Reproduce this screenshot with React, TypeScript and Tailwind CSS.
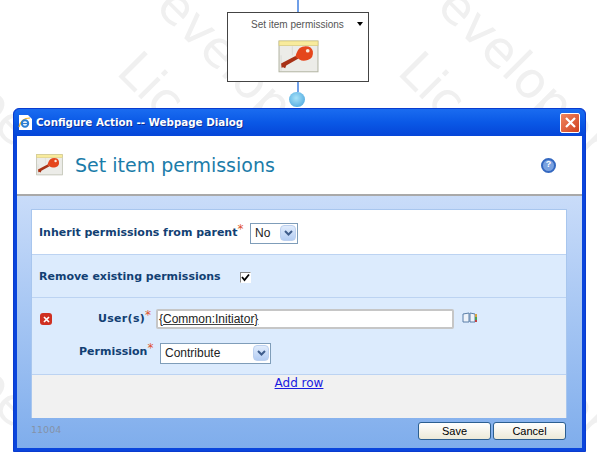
const Key = ({ size }: { size: number }) => (
  <svg width={size} height={size * 0.8} viewBox="0 0 40 32">
    <rect x="1" y="1" width="38" height="30" fill="#ecece8" stroke="#b4b6a4" />
    <rect x="1" y="1" width="38" height="4.5" fill="#f8eb9c" stroke="#d6c97e" strokeWidth="0.7" />
    <path d="M3 15 L3 30 M14 6 L14 15" stroke="#dcdcd6" strokeWidth="1" />
    <path d="M3 23 L17 15.5 L20 18 L8 25 L7 27.5 L5 26.5 L3.5 27 Z" fill="#a83216" />
    <path d="M18 13 Q20 6 27 6 Q33 6 34 11 Q35 18 29 19.5 Q24 21 21 19 L17 16 Z" fill="#e5461c" />
    <circle cx="29" cy="10.5" r="1.8" fill="#f9e9de" />
  </svg>
);

const Mark = ({ label, className }: { label: string; className: string }) => (
  <div className={`absolute rotate-45 origin-left text-[50px] leading-none text-[#f0f0f0] font-['DejaVu_Sans',sans-serif] whitespace-nowrap ${className}`}>{label}</div>
);

const Arrow = () => (
  <span className="w-[16px] self-stretch m-px rounded-sm bg-gradient-to-b from-[#e1ecfc] to-[#b4cdf3] border border-[#bcd0ef] flex items-center justify-center">
    <svg width="9" height="6" viewBox="0 0 9 6"><path d="M1 1 L4.5 4.5 L8 1" fill="none" stroke="#3f5d8c" strokeWidth="2" /></svg>
  </span>
);

const Star = () => <sup className="text-[#e0522d] text-[12px] font-normal leading-none top-[-3px]">*</sup>;

export default function App() {
  return (
    <div className="relative w-[597px] h-[453px] overflow-hidden bg-white font-['Liberation_Sans',sans-serif]">
      <Mark label="Developer" className="left-[139px] top-[-56px]" />
      <Mark label="Lic" className="left-[127px] top-[36px]" />
      <Mark label="Developer" className="left-[420px] top-[-56px]" />
      <Mark label="Lic" className="left-[408px] top-[36px]" />
      <Mark label="Developer" className="left-[-142px] top-[-56px]" />
      <Mark label="Developer" className="left-[-142px] top-[225px]" />
      <Mark label="Developer" className="left-[420px] top-[225px]" />
      <div className="relative flex flex-col">
        <div className="flex flex-col items-center w-[596px]">
          <div className="w-[2px] h-[12px] bg-[#6f9fe8]" />
          <div className="w-[142px] h-[70px] border border-[#444] bg-white flex flex-col">
            <div className="flex items-start h-[27px] pt-[4px] text-[10px] text-[#555] pl-[23px] pr-[5px] justify-between">
              <span>Set item permissions</span>
              <span className="mt-[5px] w-0 h-0 border-x-[3px] border-t-[4px] border-x-transparent border-t-black" />
            </div>
            <div className="flex justify-center"><Key size={41} /></div>
          </div>
          <div className="w-[2px] h-[10px] bg-[#6f9fe8]" />
          <div className="w-[16px] h-[15px] -ml-[2px] rounded-full bg-[radial-gradient(circle_at_45%_40%,#a8e2f8,#3f9fdc)]" />
        </div>
        <div className="ml-[13px] mt-[1px] w-[573px] h-[344px] rounded-t-[6px] bg-[#0a45dc] border border-[#0a3ccf] px-[3px] pb-[3px] flex flex-col">
          <div className="h-[27px] -mx-[3px] rounded-t-[6px] bg-gradient-to-b from-[#1a6cf0] via-[#0a58e6] to-[#0645d8] flex items-center pl-[4px] pr-[5px] shrink-0">
            <svg width="14" height="15" viewBox="0 0 14 15">
              <path d="M1 0 H10 L14 4 V15 H1 Z" fill="white" />
              <path d="M1 12 Q3 3 12 3" fill="none" stroke="#f0b429" strokeWidth="1.2" />
              <circle cx="7" cy="8.5" r="3.2" fill="none" stroke="#2b7fd4" strokeWidth="2" />
              <path d="M4 8.5 H10" stroke="#2b7fd4" strokeWidth="1.2" />
            </svg>
            <span className="ml-[4px] text-white text-[10.3px] font-bold font-['DejaVu_Sans',sans-serif] [text-shadow:1px_1px_0_#0a2f9a]">Configure Action -- Webpage Dialog</span>
            <span className="ml-auto w-[20px] h-[20px] rounded-[2px] border border-white bg-gradient-to-br from-[#f0855e] to-[#cf3f1d] flex items-center justify-center">
              <svg width="11" height="11" viewBox="0 0 11 11"><path d="M1 1 L10 10 M10 1 L1 10" stroke="white" strokeWidth="2.2" /></svg>
            </span>
          </div>
          <div className="h-[60px] bg-white border-b-2 border-[#a9a9a9] flex items-center pl-[19px] pr-[26px] shrink-0">
            <Key size={27} />
            <span className="ml-[12px] text-[#1b7ca9] text-[19px] font-['DejaVu_Sans',sans-serif]">Set item permissions</span>
            <span className="ml-auto w-[15px] h-[15px] rounded-full border-2 border-[#3468c0] bg-[#7aa2e0] text-white text-[9px] font-bold flex items-center justify-center">?</span>
          </div>
          <div className="flex-1 bg-gradient-to-b from-[#c9dcf9] to-[#7fadec] pl-[14px] pr-[15px] pt-[13px] flex flex-col">
            <div className="h-[209px] border border-[#a8c6ee] border-b-0 flex flex-col shrink-0 font-['DejaVu_Sans',sans-serif]">
              <div className="h-[45px] bg-white border-b border-[#bcd3f2] flex items-center pl-[7px] pt-[2px] shrink-0">
                <span className="text-[#123f73] text-[11px] font-bold whitespace-nowrap w-[211px]">Inherit permissions from parent<Star /></span>
                <span className="w-[48px] h-[21px] bg-white border border-[#7f9db9] flex items-center justify-between pl-[4px] pb-[1px] font-['Liberation_Sans',sans-serif] text-[12px] text-[#222]">No<Arrow /></span>
              </div>
              <div className="h-[43px] bg-[#dcebfd] border-b border-[#bcd3f2] flex items-center pl-[7px] pt-[2px] shrink-0">
                <span className="text-[#123f73] text-[11px] font-bold w-[201px]">Remove existing permissions</span>
                <span className="w-[11px] h-[11px] bg-white border border-[#888] border-b-white border-r-white flex items-center justify-center">
                  <svg width="9" height="9" viewBox="0 0 9 9"><path d="M1 4 L3.5 7 L8 1.5" fill="none" stroke="black" strokeWidth="1.8" /></svg>
                </span>
              </div>
              <div className="h-[77px] bg-[#dcebfd] border-b border-[#bcd3f2] flex flex-col pt-[11px] shrink-0">
                <div className="flex items-center h-[20px]">
                  <span className="ml-[8px] w-[12px] h-[12px] rounded-[3px] bg-[#cf3022] flex items-center justify-center">
                    <svg width="7" height="7" viewBox="0 0 7 7"><path d="M1 1 L6 6 M6 1 L1 6" stroke="white" strokeWidth="1.7" /></svg>
                  </span>
                  <span className="ml-[46px] w-[58px] text-[#123f73] text-[11px] font-bold tracking-[0.3px] whitespace-nowrap">User(s)<Star /></span>
                  <span className="w-[298px] h-[20px] bg-white border-2 border-[#c6c6c6] rounded-[2px] flex items-center pl-[1px] font-['Liberation_Sans',sans-serif] text-[12px] text-[#222] underline decoration-[#444] shrink-0">{"{Common:Initiator}"}</span>
                  <svg className="ml-[8px] -mt-[3px]" width="15" height="11" viewBox="0 0 15 11"><path d="M1 2 L7 1 L7 10 L1 10 Z M8 1 L13 2 L13 10 L8 10 Z" fill="#eef3fa" stroke="#5b7fa8" /><path d="M14 2 V5" stroke="#d8a040" strokeWidth="2" /><path d="M14 5 V8" stroke="#4fa050" strokeWidth="2" /><path d="M14 8 V10" stroke="#c04040" strokeWidth="2" /></svg>
                </div>
                <div className="flex items-center h-[21px] mt-[14px]">
                  <span className="ml-[47px] w-[81px] pb-[2px] text-[#123f73] text-[11px] font-bold whitespace-nowrap">Permission<Star /></span>
                  <span className="w-[111px] h-[21px] bg-white border border-[#7f9db9] flex items-center justify-between pl-[4px] pb-[1px] font-['Liberation_Sans',sans-serif] text-[12px] text-[#222]">Contribute<Arrow /></span>
                </div>
              </div>
              <div className="flex-1 bg-[#f1f1f1] flex justify-center pt-[1px]">
                <span className="text-[#1a1ae0] text-[12px] underline leading-none h-fit mt-[1px]">Add row</span>
              </div>
            </div>
            <div className="flex items-center h-[28px] pb-[2px] pr-[1px]">
              <span className="text-[#8492a8] text-[9.5px] font-['DejaVu_Sans',sans-serif] -mt-[2px]">11004</span>
              {["Save", "Cancel"].map((b, i) => (
                <span key={b} className={`${i === 0 ? "ml-auto" : "ml-[2px]"} w-[73px] h-[18px] rounded-[3px] border border-[#2c5f90] bg-gradient-to-b from-white to-[#ece9d8] flex items-center justify-center text-[11px] text-black`}>{b}</span>
              ))}
            </div>
          </div>
        </div>
      </div>
    </div>
  );
}
